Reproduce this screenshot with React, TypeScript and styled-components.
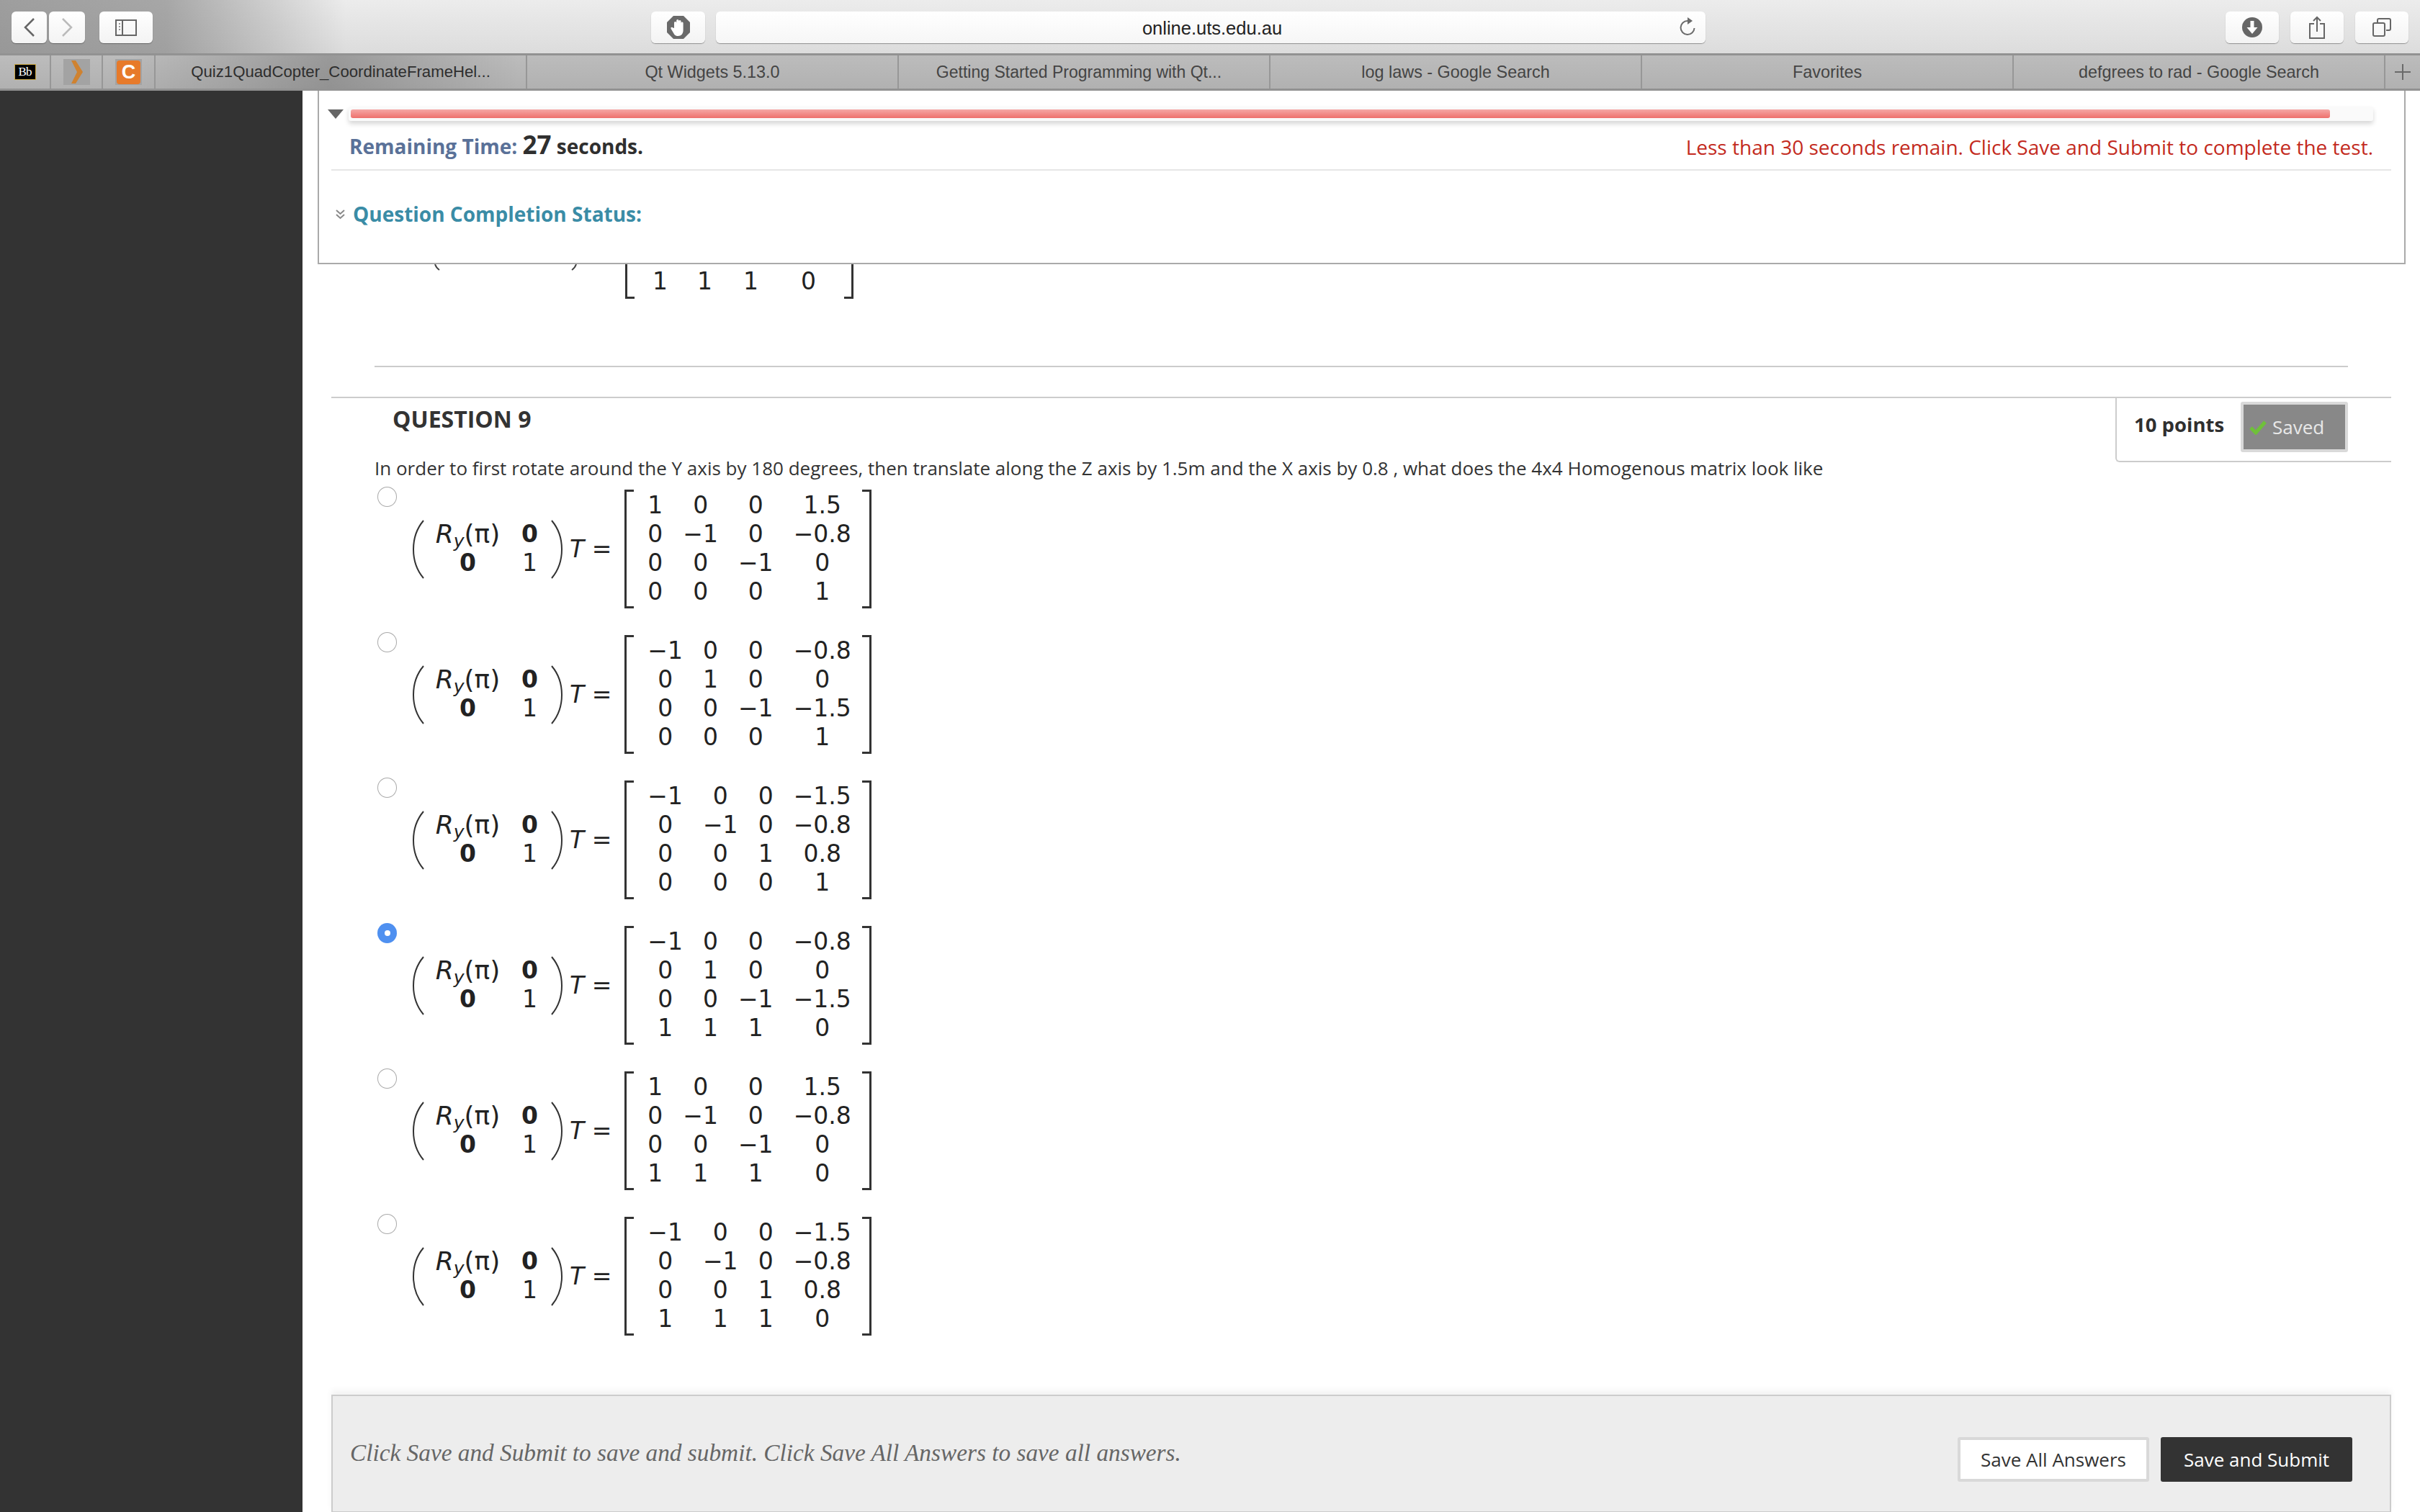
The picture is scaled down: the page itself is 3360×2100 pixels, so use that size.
import React from "react";
import styled, { createGlobalStyle } from "styled-components";

const GlobalStyle = createGlobalStyle`
  html, body { margin: 0; padding: 0; background: #fff; }
  body { font-family: "Open Sans", "Liberation Sans", sans-serif; color: #333; }
  * { box-sizing: border-box; }
`;

const Page = styled.div`
  width: 3360px;
  height: 2100px;
  overflow: hidden;
  display: flex;
  flex-direction: column;
`;

/* safari chrome */
const Toolbar = styled.div`
  height: 74px;
  flex: none;
  display: flex;
  align-items: flex-start;
  padding: 16px 16px 0;
  background:
    linear-gradient(90deg, rgba(110,110,110,.62) 0, rgba(110,110,110,.55) 230px, rgba(110,110,110,0) 480px),
    linear-gradient(180deg, #ececec, #dcdcdc);
`;

const ChromeButton = styled.div<{ $w: number; $ml?: number }>`
  width: ${(p) => p.$w}px;
  margin-left: ${(p) => p.$ml ?? 0}px;
  height: 44px;
  flex: none;
  display: flex;
  align-items: center;
  justify-content: center;
  background: linear-gradient(180deg, #fff, #f3f3f3);
  border-radius: 6px;
  box-shadow: 0 1px 1px rgba(0,0,0,.35);
`;

const UrlBar = styled.div`
  width: 1374px;
  height: 44px;
  flex: none;
  margin-left: 15px;
  padding: 2px 0 0 4px;
  display: flex;
  align-items: center;
  justify-content: center;
  position: relative;
  background: linear-gradient(180deg, #fff, #f6f6f6);
  border-radius: 6px;
  box-shadow: 0 1px 1px rgba(0,0,0,.35);
  font-family: "Liberation Sans", sans-serif;
  font-size: 25.5px;
  color: #222;
`;

const ReloadSlot = styled.span`
  position: absolute;
  right: 12px;
  top: 8px;
  display: flex;
`;

const TabBar = styled.div`
  height: 52px;
  flex: none;
  display: flex;
  border-top: 3px solid #929292;
  border-bottom: 3px solid #929292;
  background:
    linear-gradient(90deg, rgba(80,80,80,0) 180px, rgba(80,80,80,.32) 460px, rgba(80,80,80,0) 720px),
    linear-gradient(180deg, #bcbcbc, #b1b1b1);
`;

const IconTab = styled.div<{ $w: number }>`
  width: ${(p) => p.$w}px;
  flex: none;
  display: flex;
  align-items: center;
  justify-content: center;
  border-right: 2px solid #979797;
`;

const IconPlate = styled.div`
  width: 37px;
  height: 36px;
  background: #a3a3a3;
  display: flex;
  align-items: center;
  justify-content: center;
`;

const BbIcon = styled.div`
  width: 30px;
  height: 22px;
  background: #000;
  border: 1px solid #c9a642;
  color: #fff;
  font-family: "Liberation Serif", serif;
  font-size: 17px;
  line-height: 20px;
  text-align: center;
  letter-spacing: -1px;
`;

const OrangeC = styled.div`
  width: 33px;
  height: 33px;
  border-radius: 4px;
  background: #e77a2a;
  color: #fff;
  font-family: "Liberation Sans", sans-serif;
  font-weight: 700;
  font-size: 27px;
  line-height: 33px;
  text-align: center;
`;

const Tab = styled.div<{ $first?: boolean; $pr?: number; $size?: number }>`
  width: 516px;
  flex: none;
  padding-right: ${(p) => p.$pr ?? 0}px;
  display: flex;
  align-items: center;
  justify-content: center;
  border-right: 2px solid #979797;
  font-family: "Liberation Sans", sans-serif;
  font-size: ${(p) => p.$size ?? 23.4}px;
  color: ${(p) => (p.$first ? "#2e2e2e" : "#444")};
`;

const NewTab = styled.div`
  flex: 1;
  display: flex;
  align-items: center;
  justify-content: center;
`;

/* page body */
const Body = styled.div`
  flex: 1;
  display: flex;
  min-height: 0;
`;

const Sidebar = styled.div`
  width: 420px;
  flex: none;
  background: #333;
`;

const Main = styled.div`
  flex: 1;
  background: #fff;
  min-width: 0;
`;

const TimerPanel = styled.div`
  width: 2899px;
  height: 241px;
  margin-left: 21px;
  padding: 22px 18px 0 17px;
  border: 2px solid #aaa;
  border-top: none;
  background: #fff;
`;

const ProgressRow = styled.div`
  display: flex;
  align-items: center;
  gap: 7px;
  margin-left: -5px;
  margin-right: 25px;
`;

const Caret = styled.div`
  width: 0;
  height: 0;
  flex: none;
  border-left: 11.5px solid transparent;
  border-right: 11.5px solid transparent;
  border-top: 13px solid #666;
`;

const ProgressTrack = styled.div`
  flex: 1;
  height: 20px;
  padding: 4px 60px 4px 3px;
  background: #fafafa;
  border-radius: 3px;
  box-shadow: 0 4px 6px rgba(0,0,0,.16);
`;

const ProgressFill = styled.div`
  height: 12px;
  border-radius: 3px;
  background: linear-gradient(180deg, #f5a8a6, #ee706c);
`;

const TimeRow = styled.div`
  height: 69px;
  padding: 0 25px;
  display: flex;
  align-items: center;
  justify-content: space-between;
  border-bottom: 2px solid #e6e6e6;
`;

const TimeText = styled.div`
  font-size: 28px;
  font-weight: 700;
  color: #2f2f2f;
  margin-top: -3px;
`;

const TimeLabel = styled.span`
  color: #5a7198;
`;

const TimeValue = styled.span`
  font-size: 35px;
`;

const Warning = styled.div`
  font-size: 28px;
  color: #c32a20;
  padding-top: 4px;
`;

const StatusRow = styled.div`
  margin-top: 46px;
  padding-left: 5px;
  height: 28px;
  display: flex;
  align-items: center;
  gap: 10px;
  font-size: 28px;
  font-weight: 700;
  color: #3a8ca6;
`;

/* previous question scrolled under the panel */
const PeekFormula = styled.div`
  height: 141px;
  display: flex;
  align-items: flex-start;
  padding-left: 183px;
`;

const PeekTick = styled.svg<{ $ml: number }>`
  flex: none;
  margin-left: ${(p) => p.$ml}px;
`;

const PeekBracket = styled.div<{ $side: "left" | "right"; $ml: number }>`
  width: 13px;
  height: 48px;
  flex: none;
  margin-left: ${(p) => p.$ml}px;
  border-bottom: 3px solid #333;
  border-${(p) => p.$side}: 3px solid #333;
`;

const PeekRow = styled.div`
  display: grid;
  grid-template-columns: 62px 64px 80px 21px;
  margin-left: 25px;
  height: 46px;
  align-items: center;
  font-family: "DejaVu Sans", sans-serif;
  font-size: 33px;
  color: #222;
`;

const Separator = styled.div`
  height: 2px;
  margin: 0 100px 0 100px;
  background: #ccc;
`;

const Question = styled.section`
  margin: 41px 40px 0 40px;
  border-top: 2px solid #ccc;
`;

const QuestionHead = styled.div`
  height: 83px;
  display: flex;
  justify-content: space-between;
  align-items: flex-start;
`;

const QuestionTitle = styled.h3`
  margin: 0;
  padding-left: 85px;
  font-size: 32px;
  line-height: 58px;
  font-weight: 700;
  color: #333;
`;

const PointsBox = styled.div`
  width: 383px;
  height: 89px;
  flex: none;
  display: flex;
  align-items: flex-start;
  padding: 5px 0 0 24px;
  border-left: 2px solid #ccc;
  border-bottom: 2px solid #ccc;
  border-bottom-left-radius: 6px;
  background: #fff;
`;

const Points = styled.div`
  width: 148px;
  flex: none;
  font-size: 27.5px;
  font-weight: 700;
  line-height: 64px;
  color: #2f2f2f;
  white-space: nowrap;
`;

const SavedBadge = styled.div`
  width: 149px;
  height: 70px;
  flex: none;
  display: flex;
  align-items: center;
  gap: 8px;
  padding-left: 8px;
  background: #888;
  border: 4px solid #d9d9d9;
  border-radius: 3px;
  color: #e8e8e8;
  font-size: 26px;
`;

const Prompt = styled.p`
  margin: 0 0 12px 60px;
  font-size: 26px;
  line-height: 28px;
  color: #333;
  white-space: nowrap;
`;

const Option = styled.div`
  height: 202px;
  padding-left: 64px;
  display: flex;
  align-items: flex-start;
  gap: 21px;
`;

const Radio = styled.span<{ $checked?: boolean }>`
  width: 27px;
  height: 28px;
  flex: none;
  border-radius: 50%;
  display: flex;
  align-items: center;
  justify-content: center;
  background: ${(p) => (p.$checked ? "#4f90f0" : "#fff")};
  border: ${(p) => (p.$checked ? "none" : "1.5px solid #aaa")};
`;

const RadioDot = styled.span`
  width: 8px;
  height: 8px;
  border-radius: 50%;
  background: #fff;
`;

const Formula = styled.div`
  height: 165px;
  margin-top: 4px;
  display: flex;
  align-items: center;
  font-family: "DejaVu Sans", sans-serif;
  font-size: 33px;
  color: #222;
`;

const Lhs = styled.div`
  display: grid;
  grid-template-columns: 89px 21px;
  column-gap: 31px;
  grid-auto-rows: 40px;
  align-items: center;
  justify-items: center;
  margin: 0 18px 2px 15px;
`;

const RotationTerm = styled.span`
  font-size: 36px;
  white-space: nowrap;
`;

const Ital = styled.i`
  font-style: italic;
`;

const Sub = styled.sub`
  font-size: 25px;
  font-style: italic;
  line-height: 0;
  vertical-align: -6px;
`;

const BoldZero = styled.b`
  font-weight: 700;
`;

const Equals = styled.span`
  margin-left: 9px;
  margin-right: 18px;
  white-space: nowrap;
`;

const SquareBracket = styled.span<{ $side: "left" | "right" }>`
  width: 13px;
  height: 165px;
  flex: none;
  border-top: 3px solid #333;
  border-bottom: 3px solid #333;
  border-${(p) => p.$side}: 3px solid #333;
`;

const MatrixGrid = styled.div`
  display: grid;
  grid-template-columns: repeat(4, auto);
  column-gap: 28px;
  grid-auto-rows: 40px;
  align-items: center;
  justify-items: center;
  margin: 0 15px 3px 19px;
`;

const Footer = styled.div`
  width: 2860px;
  height: 164px;
  margin: 49px 0 0 40px;
  display: flex;
  align-items: center;
  justify-content: space-between;
  padding: 0 52px 0 24px;
  background: #ededed;
  border: 2px solid #ccc;
  box-shadow: 0 -6px 8px rgba(0,0,0,.05);
`;

const FooterNote = styled.div`
  font-family: "Liberation Serif", serif;
  font-style: italic;
  font-size: 33.3px;
  color: #666;
  padding-bottom: 2px;
`;

const FooterActions = styled.div`
  display: flex;
  gap: 16px;
  margin-top: 16px;
`;

const ActionButton = styled.div<{ $primary?: boolean }>`
  width: 266px;
  height: 62px;
  display: flex;
  align-items: center;
  justify-content: center;
  border-radius: 3px;
  font-size: 26px;
  background: ${(p) => (p.$primary ? "#333" : "#fff")};
  color: ${(p) => (p.$primary ? "#fff" : "#333")};
  border: ${(p) => (p.$primary ? "none" : "4px solid #d9d9d9")};
`;

const M = "\u2212";

const matrices: string[][][] = [
  [["1", "0", "0", "1.5"], ["0", `${M}1`, "0", `${M}0.8`], ["0", "0", `${M}1`, "0"], ["0", "0", "0", "1"]],
  [[`${M}1`, "0", "0", `${M}0.8`], ["0", "1", "0", "0"], ["0", "0", `${M}1`, `${M}1.5`], ["0", "0", "0", "1"]],
  [[`${M}1`, "0", "0", `${M}1.5`], ["0", `${M}1`, "0", `${M}0.8`], ["0", "0", "1", "0.8"], ["0", "0", "0", "1"]],
  [[`${M}1`, "0", "0", `${M}0.8`], ["0", "1", "0", "0"], ["0", "0", `${M}1`, `${M}1.5`], ["1", "1", "1", "0"]],
  [["1", "0", "0", "1.5"], ["0", `${M}1`, "0", `${M}0.8`], ["0", "0", `${M}1`, "0"], ["1", "1", "1", "0"]],
  [[`${M}1`, "0", "0", `${M}1.5`], ["0", `${M}1`, "0", `${M}0.8`], ["0", "0", "1", "0.8"], ["1", "1", "1", "0"]],
];

const tabs = [
  { title: "Quiz1QuadCopter_CoordinateFrameHel...", size: 22.2 },
  { title: "Qt Widgets 5.13.0" },
  { title: "Getting Started Programming with Qt...", size: 23, pr: 14 },
  { title: "log laws - Google Search" },
  { title: "Favorites" },
  { title: "defgrees to rad - Google Search" },
];

const Paren = ({ flip }: { flip?: boolean }) => (
  <svg width="18" height="82" viewBox="0 0 18 82" style={flip ? { transform: "scaleX(-1)" } : undefined}>
    <path d="M16 1C5 14 2 28 2 41s3 27 14 40" fill="none" stroke="#333" strokeWidth="2" />
  </svg>
);

const HandIcon = () => (
  <svg width="34" height="32" viewBox="0 0 34 32">
    <polygon points="10,0 24,0 33,9 33,23 24,32 10,32 1,23 1,9" fill="#6a6a6a" />
    <path d="M11 17V9.5a1.6 1.6 0 0 1 3.2 0V15V6.5a1.6 1.6 0 0 1 3.2 0V15V7.5a1.6 1.6 0 0 1 3.2 0V16V10a1.5 1.5 0 0 1 3 0v10c0 5-3 8-7 8s-5.500-2-7-5l-3-5c-1-2 1.500-3 2.600-1.500z" fill="#fff" />
  </svg>
);

function Answer({ rows, checked }: { rows: string[][]; checked?: boolean }) {
  return (
    <Option>
      <Radio $checked={checked}>{checked && <RadioDot />}</Radio>
      <Formula>
        <Paren />
        <Lhs>
          <RotationTerm>
            <Ital>R</Ital>
            <Sub>y</Sub>(π)
          </RotationTerm>
          <BoldZero>0</BoldZero>
          <BoldZero>0</BoldZero>
          <span>1</span>
        </Lhs>
        <Paren flip />
        <Equals>
          <Ital>T</Ital> =
        </Equals>
        <SquareBracket $side="left" />
        <MatrixGrid>
          {rows.flat().map((cell, i) => (
            <span key={i}>{cell}</span>
          ))}
        </MatrixGrid>
        <SquareBracket $side="right" />
      </Formula>
    </Option>
  );
}

const App = () => {
  return (
    <Page>
      <GlobalStyle />
      <Toolbar>
        <ChromeButton $w={49}>
          <svg width="16" height="26" viewBox="0 0 16 26">
            <path d="M14 1L2 13l12 12" fill="none" stroke="#666" strokeWidth="2.500" />
          </svg>
        </ChromeButton>
        <ChromeButton $w={50} $ml={3}>
          <svg width="16" height="26" viewBox="0 0 16 26">
            <path d="M2 1l12 12L2 25" fill="none" stroke="#bbb" strokeWidth="2.500" />
          </svg>
        </ChromeButton>
        <ChromeButton $w={74} $ml={20}>
          <svg width="30" height="23" viewBox="0 0 30 23">
            <rect x="1" y="1" width="28" height="21" fill="none" stroke="#666" strokeWidth="2" />
            <path d="M10 1v21" stroke="#666" strokeWidth="2" />
            <path d="M5 6h2M5 10h2M5 14h2" stroke="#999" strokeWidth="2" />
          </svg>
        </ChromeButton>
        <ChromeButton $w={75} $ml={692}>
          <HandIcon />
        </ChromeButton>
        <UrlBar>
          online.uts.edu.au
          <ReloadSlot>
            <svg width="26" height="28" viewBox="0 0 26 28">
              <path d="M13 5a9.500 9.500 0 1 0 9.500 10" fill="none" stroke="#6a6a6a" strokeWidth="2" />
              <path d="M13 0l7 5-7 5z" fill="#6a6a6a" />
            </svg>
          </ReloadSlot>
        </UrlBar>
        <ChromeButton $w={74} $ml={722}>
          <svg width="28" height="28" viewBox="0 0 28 28">
            <circle cx="14" cy="14" r="14" fill="#666" />
            <path d="M11.500 5h5v9h5L14 23l-7.500-9h5z" fill="#fff" />
          </svg>
        </ChromeButton>
        <ChromeButton $w={74} $ml={16}>
          <svg width="24" height="32" viewBox="0 0 24 32">
            <path d="M8 11H2v20h20V11h-6" fill="none" stroke="#666" strokeWidth="2" />
            <path d="M12 2v20M7 7l5-5 5 5" fill="none" stroke="#666" strokeWidth="2" />
          </svg>
        </ChromeButton>
        <ChromeButton $w={74} $ml={16}>
          <svg width="26" height="26" viewBox="0 0 26 26">
            <rect x="1" y="7" width="16" height="18" rx="2" fill="none" stroke="#666" strokeWidth="2" />
            <path d="M7 6V3a2 2 0 0 1 2-2h14a2 2 0 0 1 2 2v12a2 2 0 0 1-2 2h-4" fill="none" stroke="#666" strokeWidth="2" />
          </svg>
        </ChromeButton>
      </Toolbar>

      <TabBar>
        <IconTab $w={71}>
          <BbIcon>Bb</BbIcon>
        </IconTab>
        <IconTab $w={72}>
          <IconPlate>
            <svg width="20" height="32" viewBox="0 0 20 32">
              <path d="M3 0h6l10 16L9 32H3l8-16z" fill="#cf8230" />
            </svg>
          </IconPlate>
        </IconTab>
        <IconTab $w={73}>
          <IconPlate>
            <OrangeC>C</OrangeC>
          </IconPlate>
        </IconTab>
        {tabs.map((t, i) => (
          <Tab key={t.title} $first={i === 0} $size={t.size} $pr={t.pr}>
            {t.title}
          </Tab>
        ))}
        <NewTab>
          <svg width="24" height="24" viewBox="0 0 24 24">
            <path d="M12 1v22M1 12h22" stroke="#6a6a6a" strokeWidth="2" />
          </svg>
        </NewTab>
      </TabBar>

      <Body>
        <Sidebar />
        <Main>
          <TimerPanel>
            <ProgressRow>
              <Caret />
              <ProgressTrack>
                <ProgressFill />
              </ProgressTrack>
            </ProgressRow>
            <TimeRow>
              <TimeText>
                <TimeLabel>Remaining Time:</TimeLabel> <TimeValue>27</TimeValue> seconds.
              </TimeText>
              <Warning>Less than 30 seconds remain. Click Save and Submit to complete the test.</Warning>
            </TimeRow>
            <StatusRow>
              <svg width="15" height="15" viewBox="0 0 15 15">
                <path d="M2 2l5.500 5 5.500-5M2 8l5.500 5 5.500-5" fill="none" stroke="#888" strokeWidth="2" />
              </svg>
              Question Completion Status:
            </StatusRow>
          </TimerPanel>

          <PeekFormula>
            <PeekTick $ml={0} width="8" height="9" viewBox="0 0 8 9">
              <path d="M1 0c1 3 3 6 6 8" fill="none" stroke="#444" strokeWidth="2" />
            </PeekTick>
            <PeekTick $ml={182} width="8" height="9" viewBox="0 0 8 9">
              <path d="M7 0C6 3 4 6 1 8" fill="none" stroke="#444" strokeWidth="2" />
            </PeekTick>
            <PeekBracket $side="left" $ml={67} />
            <PeekRow>
              <span>1</span>
              <span>1</span>
              <span>1</span>
              <span>0</span>
            </PeekRow>
            <PeekBracket $side="right" $ml={39} />
          </PeekFormula>
          <Separator />

          <Question>
            <QuestionHead>
              <QuestionTitle>QUESTION 9</QuestionTitle>
              <PointsBox>
                <Points>10 points</Points>
                <SavedBadge>
                  <svg width="24" height="22" viewBox="0 0 24 22">
                    <path d="M2 12l7 7L22 4" fill="none" stroke="#6fc03a" strokeWidth="5" />
                  </svg>
                  Saved
                </SavedBadge>
              </PointsBox>
            </QuestionHead>
            <Prompt>
              In order to first rotate around the Y axis by 180 degrees, then translate along the Z axis by 1.5m and the X axis by 0.8 , what does the 4x4 Homogenous matrix look like
            </Prompt>
            {matrices.map((rows, i) => (
              <Answer key={i} rows={rows} checked={i === 3} />
            ))}
          </Question>

          <Footer>
            <FooterNote>Click Save and Submit to save and submit. Click Save All Answers to save all answers.</FooterNote>
            <FooterActions>
              <ActionButton>Save All Answers</ActionButton>
              <ActionButton $primary>Save and Submit</ActionButton>
            </FooterActions>
          </Footer>
        </Main>
      </Body>
    </Page>
  );
};

export default App;
